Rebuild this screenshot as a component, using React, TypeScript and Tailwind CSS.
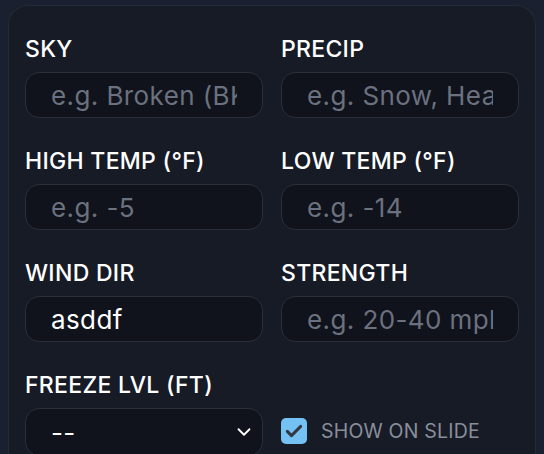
import { ChevronDown } from 'lucide-react';

const font = { fontFamily: 'Inter, "Noto Sans", sans-serif' };

const labelCls = 'text-[23px] leading-[28px] font-medium text-white tracking-[0.3px]';

function Field({ label, placeholder, value }: { label: string; placeholder?: string; value?: string }) {
  return (
    <div className="flex flex-col">
      <label className={labelCls}>{label}</label>
      <input
        readOnly
        defaultValue={value}
        placeholder={placeholder}
        className="mt-[9px] h-[46px] w-full rounded-[14px] border border-[#2a2f3a] bg-[#10131b] px-[25px] text-[26px] tracking-[0.4px] text-white placeholder:text-[#6b717f] outline-none"
      />
    </div>
  );
}

export default function App() {
  return (
    <div className="h-[454px] w-[544px] overflow-hidden bg-[#1b2030] pt-[5px] px-[8px]" style={font}>
      <div className="h-[460px] rounded-t-[20px] border border-b-0 border-[#252a37] bg-[#171b26] px-[16px] pt-[29px]">
        <div className="grid grid-cols-2 gap-x-[18px] gap-y-[29px]">
          <Field label="SKY" placeholder="e.g. Broken (BKN)" />
          <Field label="PRECIP" placeholder="e.g. Snow, Heavy" />
          <Field label="HIGH TEMP (°F)" placeholder="e.g. -5" />
          <Field label="LOW TEMP (°F)" placeholder="e.g. -14" />
          <Field label="WIND DIR" value="asddf" />
          <Field label="STRENGTH" placeholder="e.g. 20-40 mph" />
          <div className="flex flex-col">
            <label className={labelCls}>FREEZE LVL (FT)</label>
            <div className="mt-[9px] flex h-[48px] items-center justify-between rounded-[14px] border border-[#2a2f3a] bg-[#10131b] pl-[25px] pr-[7px] text-[26px] tracking-[0.4px] text-white">
              <span>--</span>
              <ChevronDown className="h-[22px] w-[22px] text-white" strokeWidth={2} />
            </div>
          </div>
          <div className="flex items-end pb-[10px]">
            <div className="flex items-center gap-[14px]">
              <span className="flex h-[26px] w-[26px] items-center justify-center rounded-[5px] bg-[#74c2f3]">
                <svg viewBox="0 0 24 24" className="h-[20px] w-[20px]">
                  <path d="M4 12.5l5 5L20 6.5" fill="none" stroke="#333842" strokeWidth={3.6} strokeLinecap="round" strokeLinejoin="round" />
                </svg>
              </span>
              <span className="text-[19.5px] text-[#898e9b] tracking-[0.2px]">SHOW ON SLIDE</span>
            </div>
          </div>
        </div>
      </div>
    </div>
  );
}
